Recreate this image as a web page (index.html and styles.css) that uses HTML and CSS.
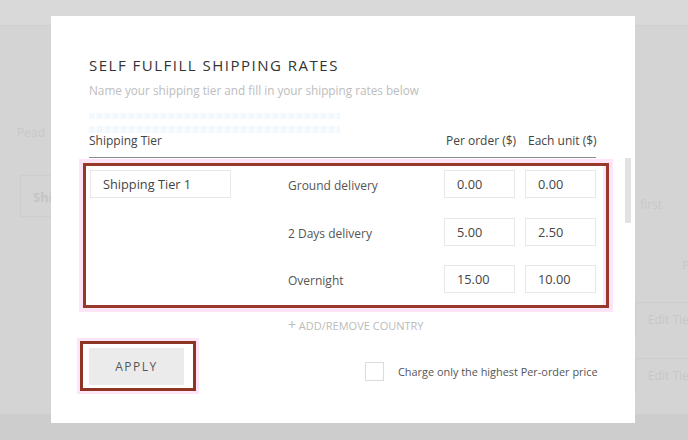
FILE: index.html
```html
<!DOCTYPE html>
<html>
<head>
<meta charset="utf-8">
<link rel="stylesheet" href="styles.css">
</head>
<body>
<div class="page">
  <div class="topbar"></div>
  <div class="content">
    <div class="left-col">
      <div class="bg-label">Pead</div>
      <div class="bg-tab">Shi</div>
    </div>
    <div class="right-col">
      <div class="bg-first">first</div>
      <div class="bg-p">P</div>
      <div class="bg-edit">Edit Tie</div>
      <div class="bg-edit">Edit Tie</div>
    </div>
  </div>
  <div class="footer"></div>
</div>

<div class="modal">
  <h1 class="title">SELF FULFILL SHIPPING RATES</h1>
  <p class="subtitle">Name your shipping tier and fill in your shipping rates below</p>
  <div class="ghost"></div>
  <div class="thead">
    <span class="th-tier">Shipping Tier</span>
    <span class="th-num">Per order ($)</span>
    <span class="th-num">Each unit ($)</span>
  </div>
  <div class="tier-box">
    <div class="grid">
      <div class="field tier">Shipping Tier 1</div>
      <div class="label">Ground delivery</div>
      <div class="field">0.00</div>
      <div class="field">0.00</div>

      <div></div>
      <div class="label">2 Days delivery</div>
      <div class="field">5.00</div>
      <div class="field">2.50</div>

      <div></div>
      <div class="label">Overnight</div>
      <div class="field">15.00</div>
      <div class="field">10.00</div>
    </div>
  </div>
  <div class="add-country"><span class="plus">+</span> ADD/REMOVE COUNTRY</div>
  <div class="actions">
    <div class="apply-wrap"><div class="apply">APPLY</div></div>
    <label class="check">
      <span class="box"></span>
      <span class="check-text">Charge only the highest Per-order price</span>
    </label>
  </div>
  <div class="scrollbar"></div>
</div>
</body>
</html>
```

FILE: styles.css
```css
* { box-sizing: border-box; }
html, body { margin: 0; padding: 0; }
body {
  width: 688px;
  height: 440px;
  overflow: hidden;
  background: #d4d4d4;
  font-family: "Open Sans", "Noto Sans", sans-serif;
  position: relative;
}
.page {
  height: 440px;
  display: flex;
  flex-direction: column;
}
.topbar {
  height: 26px;
  background: #d9d9d9;
  border-bottom: 1px solid #d0d0d0;
}
.content {
  flex: 1;
  display: flex;
  justify-content: space-between;
}
.footer {
  height: 26px;
  background: #cdcdcd;
}
.left-col {
  width: 51px;
  padding-top: 98px;
}
.bg-label {
  font-size: 12px;
  color: #c8c8c8;
  padding-left: 17px;
}
.bg-tab {
  margin-top: 34px;
  margin-left: 20px;
  height: 42px;
  border: 1px solid #cdcdcd;
  border-right: none;
  font-size: 13px;
  font-weight: 700;
  color: #c4c4c4;
  padding: 12px 0 0 12px;
}
.right-col {
  width: 53px;
  padding-top: 170px;
  font-size: 12px;
  color: #c8c8c8;
}
.bg-first { padding-left: 5px; }
.bg-p { padding-left: 47px; margin-top: 44px; }
.bg-edit {
  margin-top: 28px;
  height: 34px;
  border-top: 1px solid #cdcdcd;
  border-left: 1px solid #cdcdcd;
  padding: 8px 0 0 12px;
  white-space: nowrap;
  overflow: hidden;
}
.bg-edit + .bg-edit { margin-top: 22px; }

/* modal overlay */
.modal {
  position: absolute;
  left: 51px;
  top: 16px;
  width: 584px;
  height: 407px;
  background: #fff;
  padding: 39px 39px 0 38px;
}
.title {
  margin: 0;
  font-size: 15px;
  line-height: 20px;
  font-weight: 400;
  letter-spacing: 1.5px;
  color: #333;
}
.subtitle {
  margin: 7px 0 0;
  font-size: 11.75px;
  line-height: 16px;
  color: #bdbdbd;
  white-space: nowrap;
}
.ghost {
  margin-top: 13px;
  width: 251px;
  height: 22px;
  background:
    repeating-linear-gradient(90deg, #f1f8fe 0 5px, #fafdff 5px 8px) 0 2px / 100% 6px no-repeat,
    repeating-linear-gradient(90deg, #f1f8fe 0 5px, #fafdff 5px 8px) 0 15px / 100% 7px no-repeat;
}
.thead {
  margin-top: 0;
  display: grid;
  grid-template-columns: 1fr 72px 70px;
  column-gap: 10px;
  font-size: 12px;
  line-height: 16px;
  color: #444;
  padding-bottom: 8px;
  border-bottom: 1px solid #8c8c8c;
}
.th-num { padding-left: 2px; white-space: nowrap; }
.tier-box {
  margin: 5px -13px 0 -6px;
  border: 3px solid #96382a;
  padding: 4px 10px 12px 4px;
  box-shadow: 0 0 0 4px #fde4f6, inset -3px 0 0 #fde4f6;
}
.grid {
  display: grid;
  grid-template-columns: 188px 146px 71px 71px;
  grid-auto-rows: 28px;
  column-gap: 10px;
  row-gap: 19.5px;
}
.field {
  border: 1px solid #e8e8e8;
  font-size: 12.75px;
  line-height: 26px;
  color: #444;
  padding-left: 12px;
}
.field.tier { width: 141px; }
.label {
  font-size: 12px;
  line-height: 28px;
  color: #555;
  padding-top: 2px;
}
.add-country {
  margin-top: 9px;
  padding-left: 199px;
  font-size: 11px;
  line-height: 16px;
  color: #bbb;
}
.plus { font-size: 14px; }
.actions {
  margin-top: 7px;
  margin-left: -9px;
  display: flex;
  align-items: center;
}
.apply-wrap {
  flex-shrink: 0;
  width: 116px;
  height: 50px;
  border: 3px solid #8f3526;
  padding: 4px 9px 3px 6px;
  box-shadow: 0 0 0 3px #fde4f6;
}
.apply {
  height: 37px;
  background: #ebebeb;
  font-size: 12px;
  letter-spacing: 1.5px;
  color: #555;
  display: flex;
  align-items: center;
  justify-content: center;
}
.check {
  margin-left: 169px;
  margin-top: 11px;
  display: flex;
  align-items: center;
  flex-shrink: 0;
}
.box {
  width: 19px;
  height: 19px;
  border: 1px solid #dcdcdc;
}
.check-text {
  margin-left: 14px;
  font-size: 10.9px;
  color: #555;
  white-space: nowrap;
}
.scrollbar {
  position: absolute;
  left: 574px;
  top: 142px;
  width: 6px;
  height: 65px;
  background: #e2e2e2;
}
```
